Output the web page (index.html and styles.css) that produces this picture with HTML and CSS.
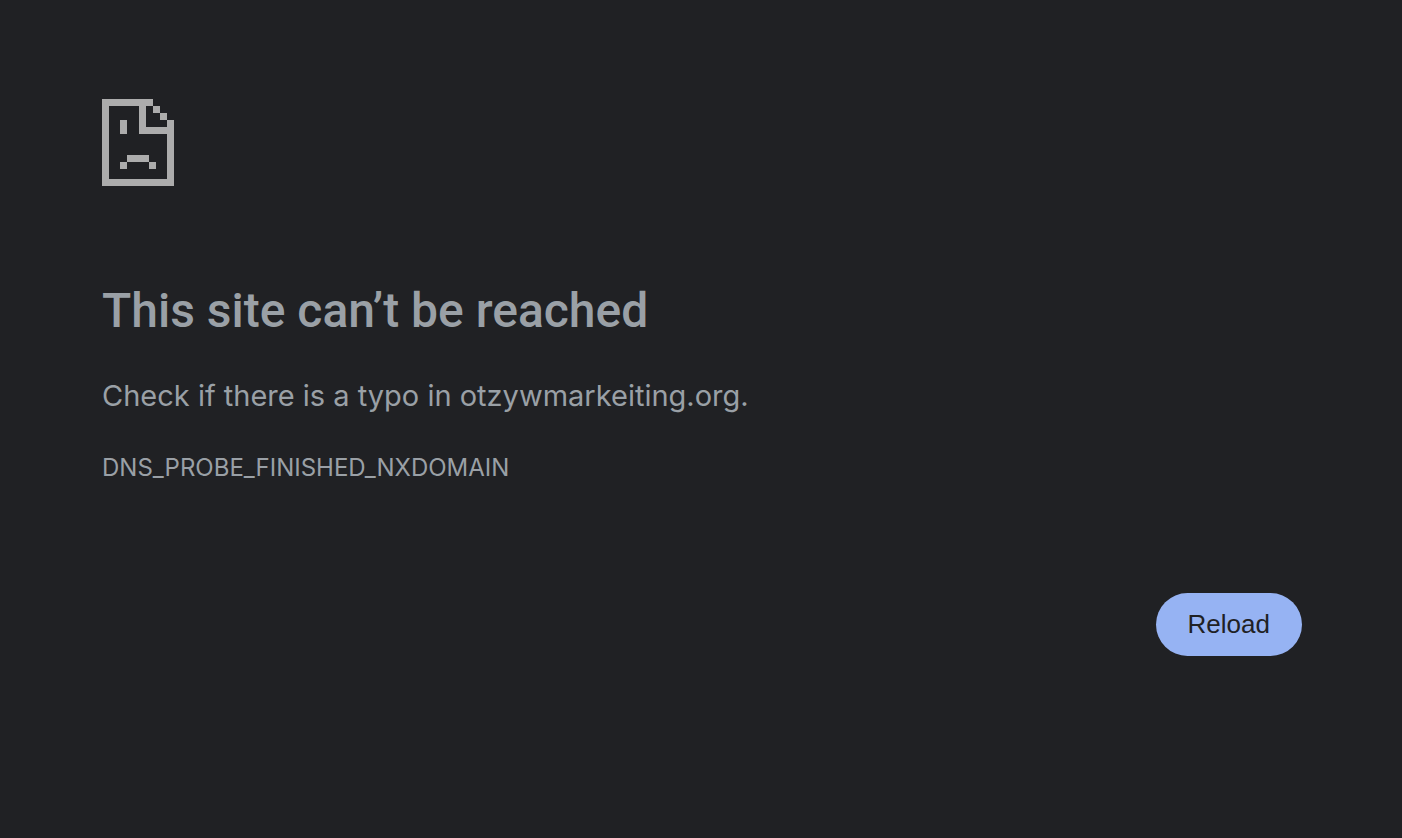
FILE: index.html
```html
<!DOCTYPE html>
<html lang="en">
<head>
    <meta charset="UTF-8">
    <meta name="viewport" content="width=device-width, initial-scale=1.0">
    <title>otzywmarkeiting.org</title>
    <link rel="stylesheet" href="styles.css">
</head>
<body>
    <main class="error-page">
        <!-- sad page icon -->
        <svg class="icon" viewBox="0 0 72 87" shape-rendering="crispEdges" aria-hidden="true">
            <path d="M0 0H51V7H44V28H65V21H72V87H0ZM7 7V80H65V35H37V7Z" fill-rule="evenodd"/>
            <path d="M51 7h7v7h-7zM58 14h7v7h-7z"/>
            <path d="M18 21h7v14h-7z"/>
            <path d="M25 56h22v7h-22zM18 63h7v7h-7zM47 63h7v7h-7z"/>
        </svg>
        <h1>This site can’t be reached</h1>
        <p class="summary">Check if there is a typo in otzywmarkeiting.org.</p>
        <p class="error-code">DNS_PROBE_FINISHED_NXDOMAIN</p>
        <div class="buttons">
            <button type="button" id="reload-button" onclick="location.reload()">Reload</button>
        </div>
    </main>
</body>
</html>
```
FILE: styles.css
```css
body {
    margin: 0;
    background-color: #202124;
    color: #9aa0a6;
    font-family: Inter, "Liberation Sans", sans-serif;
}
.error-page {
    padding: 99px 100px 100px 102px;
}
.icon {
    display: block;
    width: 72px;
    height: 87px;
    fill: #acacac;
}
h1 {
    margin: 96px 0 0;
    font-family: Roboto, "Liberation Sans", sans-serif;
    font-size: 48px;
    line-height: 58px;
    font-weight: 500;
}
.summary {
    margin: 32px 0 0;
    font-size: 29px;
    line-height: 48px;
}
.error-code {
    margin: 30px 0 0;
    font-size: 24px;
    line-height: 36px;
}
.buttons {
    display: flex;
    justify-content: flex-end;
    margin-top: 107px;
}
#reload-button {
    padding: 16px 32px;
    border: none;
    border-radius: 32px;
    background-color: #96b3f3;
    color: #202124;
    font-family: "Liberation Sans", Arial, sans-serif;
    font-size: 26px;
    line-height: 31px;
    cursor: pointer;
}
#reload-button:hover {
    background-color: #aac4f8;
}
```
